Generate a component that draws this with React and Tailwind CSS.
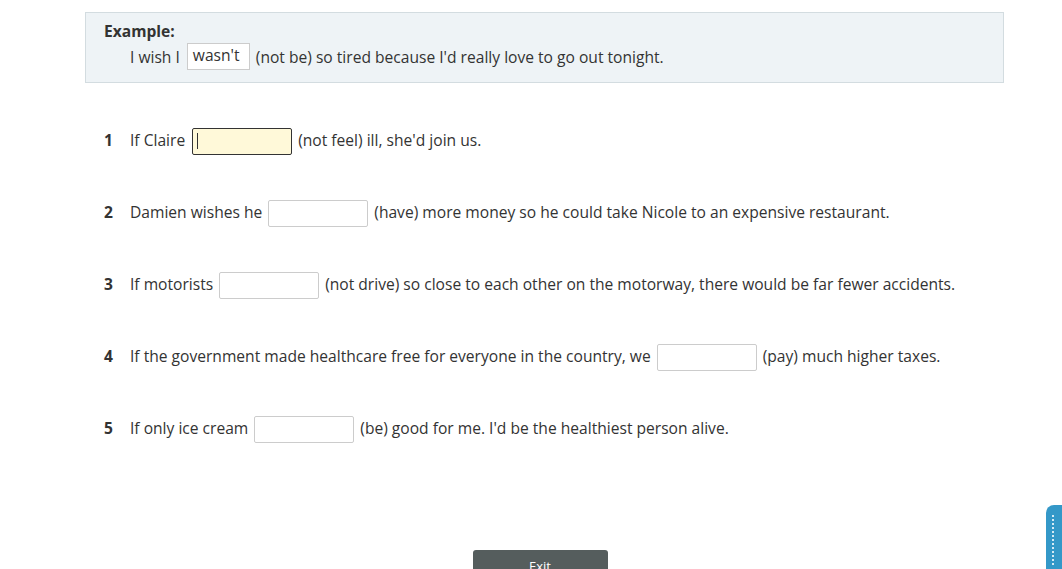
const items = [
  { n: 1, before: 'If Claire', after: "(not feel) ill, she'd join us.", active: true },
  { n: 2, before: 'Damien wishes he', after: '(have) more money so he could take Nicole to an expensive restaurant.' },
  { n: 3, before: 'If motorists', after: '(not drive) so close to each other on the motorway, there would be far fewer accidents.' },
  { n: 4, before: 'If the government made healthcare free for everyone in the country, we', after: '(pay) much higher taxes.' },
  { n: 5, before: 'If only ice cream', after: "(be) good for me. I'd be the healthiest person alive." },
]

export default function App() {
  return (
    <div className="relative h-[569px] w-[1062px] overflow-hidden bg-white text-[15.6px] text-[#333] [font-family:'Open_Sans',sans-serif]">
      <div className="ml-[85px] w-[919px] pt-[12px]">
        <div className="h-[71px] border border-[#d3dce0] bg-[#eef3f6] pl-[18px] pt-[7px]">
          <div className="font-bold leading-[22px]">Example:</div>
          <div className="mt-[1px] flex items-center pl-[26px] leading-[22px]">
            <span>I wish I</span>
            <span className="ml-[7px] mr-[6px] flex h-[27px] w-[63px] items-center border border-[#ccc] bg-white pl-[5px] pb-[3px]">wasn't</span>
            <span>(not be) so tired because I'd really love to go out tonight.</span>
          </div>
        </div>
        <div className="mt-[22px]">
          {items.map((it) => (
            <div key={it.n} className="flex h-[72px] items-center pl-[19px]">
              <span className="w-[26px] font-bold">{it.n}</span>
              <span>{it.before}</span>
              {it.active ? (
                <span className="ml-[7px] mr-[6px] flex h-[27px] w-[100px] items-center rounded-[2px] border border-[#333] bg-[#fff9d9] pl-[4px]">
                  <span className="h-[16px] w-[1px] bg-[#333]" />
                </span>
              ) : (
                <span className="ml-[6px] mr-[6px] h-[27px] w-[100px] rounded-[2px] border border-[#ccc] bg-white" />
              )}
              <span>{it.after}</span>
            </div>
          ))}
        </div>
      </div>
      <div className="mt-[85px] flex justify-center pl-[18px]">
        <div className="flex h-[40px] w-[135px] justify-center rounded-t-[3px] bg-[#555d5d] pt-[7px] text-[13px] text-white">Exit</div>
      </div>
      <div className="absolute right-0 top-[505px] h-[70px] w-[16px] rounded-tl-[8px] bg-[#3498c8]">
        <div className="ml-[6px] mt-[10px] h-[50px] w-[3px] border-l-2 border-dotted border-white/80" />
      </div>
    </div>
  )
}
